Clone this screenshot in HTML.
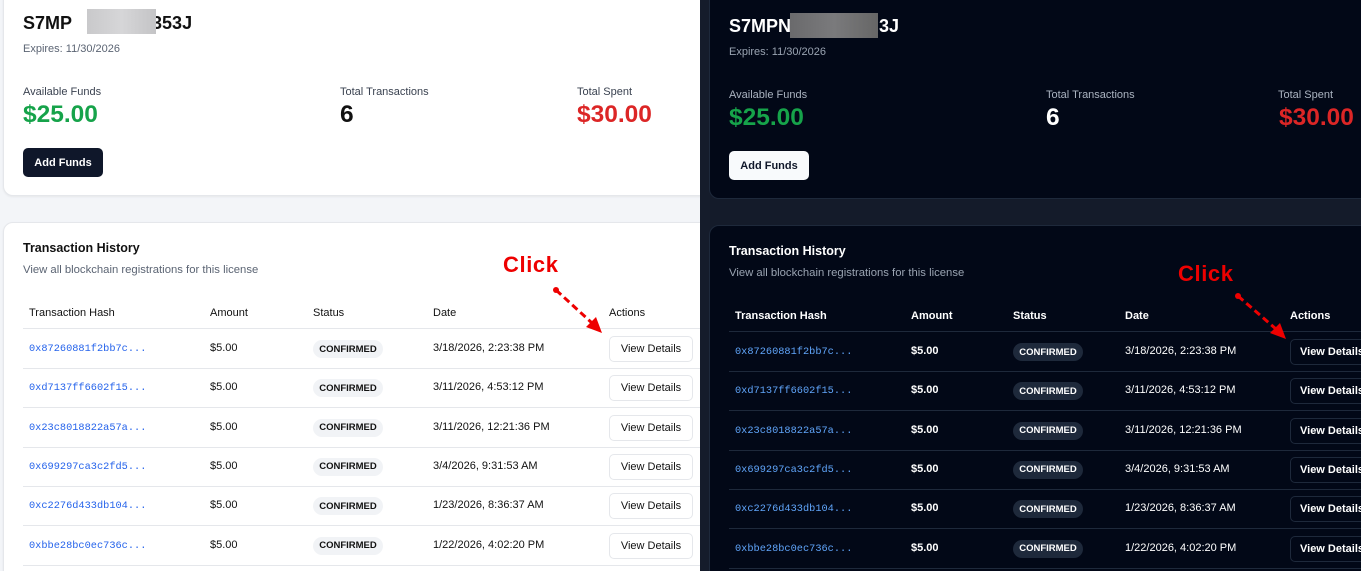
<!DOCTYPE html>
<html><head><meta charset="utf-8"><style>
*{margin:0;padding:0;box-sizing:border-box}
html,body{width:1361px;height:571px;overflow:hidden}
body{position:relative;font-family:"Liberation Sans",Arial,sans-serif;background:#111827}
.panel{position:absolute;overflow:hidden}
.L{left:0;top:0;width:700px;height:571px;background:#f3f5f8}
.R{left:700px;top:0;width:661px;height:571px;background:#141b2a}
.card{position:absolute;border-radius:10px;border:1px solid}
.L .card{background:#fff;border-color:#e5e7eb;box-shadow:0 1px 2px rgba(0,0,0,.06)}
.R .card{background:#020817;border-color:#1e293b}
.t{position:absolute;white-space:nowrap}
.title{font-size:18px;font-weight:bold}
.lbl{font-size:11px}
.big{font-size:24.5px;font-weight:bold}
.btn{position:absolute;border-radius:5px;font-size:11px;font-weight:bold;display:flex;align-items:center;justify-content:center}
.hash{font-family:"Liberation Mono",monospace;font-size:10.3px}
.badge{position:absolute;height:18px;width:70px;border-radius:9px;font-size:9.5px;font-weight:bold;display:flex;align-items:center;justify-content:center}
.vd{position:absolute;width:84px;height:26px;border-radius:5px;border:1px solid;font-size:11px;display:flex;align-items:center;justify-content:center}
.line{position:absolute;height:1px}
.click{position:absolute;color:#e00;font-weight:900;font-size:22px;font-family:"Liberation Sans",Arial,sans-serif;letter-spacing:.6px}
</style></head><body>

<div class="panel L">
 <div class="card" style="left:3px;top:-20px;width:720px;height:216px"></div>
 <div class="t title" style="left:23px;top:13px;color:#111">S7MP<span style="display:inline-block;width:80px"></span>353J</div>
 <div style="position:absolute;left:87px;top:9px;width:69px;height:25px;background:linear-gradient(90deg,#c9c9cb,#d6d6d8,#c4c4c6)"></div>
 <div class="t" style="left:23px;top:43px;font-size:11px;color:#5b6473">Expires: 11/30/2026</div>
 <div class="t lbl" style="left:23px;top:86px;color:#3a4250">Available Funds</div>
 <div class="t lbl" style="left:340px;top:86px;color:#3a4250">Total Transactions</div>
 <div class="t lbl" style="left:577px;top:86px;color:#3a4250">Total Spent</div>
 <div class="t big" style="left:23px;top:101px;color:#16a34a">$25.00</div>
 <div class="t big" style="left:340px;top:101px;color:#111">6</div>
 <div class="t big" style="left:577px;top:101px;color:#dc2626">$30.00</div>
 <div class="btn" style="left:23px;top:148px;width:80px;height:29px;background:#0f172a;color:#fff">Add Funds</div>

 <div class="card" style="left:3px;top:222px;width:720px;height:360px"></div>
 <div class="t" style="left:23px;top:241px;font-size:12.5px;font-weight:bold;color:#111">Transaction History</div>
 <div class="t" style="left:23px;top:264px;font-size:11.3px;color:#5b6473">View all blockchain registrations for this license</div>
 <div id="tblL"></div>
</div>

<div class="panel R">
 <div style="position:absolute;left:0;top:0;width:10px;height:571px;background:#151c2b"></div>
 <div class="card" style="left:9px;top:-20px;width:720px;height:219px"></div>
 <div class="t title" style="left:29px;top:16px;color:#fff">S7MPN<span style="display:inline-block;width:88px"></span>3J</div>
 <div style="position:absolute;left:90px;top:13px;width:88px;height:25px;background:linear-gradient(90deg,#6a6a6c,#7a7a7c,#666)"></div>
 <div class="t" style="left:29px;top:46px;font-size:11px;color:#9aa4b2">Expires: 11/30/2026</div>
 <div class="t lbl" style="left:29px;top:89px;color:#aab3c0">Available Funds</div>
 <div class="t lbl" style="left:346px;top:89px;color:#aab3c0">Total Transactions</div>
 <div class="t lbl" style="left:578px;top:89px;color:#aab3c0">Total Spent</div>
 <div class="t big" style="left:29px;top:104px;color:#16a34a">$25.00</div>
 <div class="t big" style="left:346px;top:104px;color:#fff">6</div>
 <div class="t big" style="left:579px;top:104px;color:#dc2626">$30.00</div>
 <div class="btn" style="left:29px;top:151px;width:80px;height:29px;background:#f8fafc;color:#0f172a">Add Funds</div>

 <div class="card" style="left:9px;top:225px;width:720px;height:360px"></div>
 <div class="t" style="left:29px;top:244px;font-size:12.5px;font-weight:bold;color:#fff">Transaction History</div>
 <div class="t" style="left:29px;top:267px;font-size:11.3px;color:#9aa4b2">View all blockchain registrations for this license</div>
 <div id="tblR"></div>
</div>

<div class="click" style="left:503px;top:252px">Click</div>
<svg style="position:absolute;left:0;top:0" width="1361" height="571">
 <g stroke="#e00" stroke-width="3" fill="#e00">
  <circle cx="556" cy="290" r="3" stroke="none"/>
  <line x1="556" y1="290" x2="592" y2="323" stroke-dasharray="7,4"/>
  <polygon points="602,333 586,327 596,317" stroke="none"/>
  <circle cx="1238" cy="296" r="3" stroke="none"/>
  <line x1="1238" y1="296" x2="1276" y2="329" stroke-dasharray="7,4"/>
  <polygon points="1286,339 1270,333 1280,323" stroke="none"/>
 </g>
</svg>
<div class="click" style="left:1178px;top:261px">Click</div>

<script>
const rows=[["0x87260881f2bb7c...","3/18/2026, 2:23:38 PM"],["0xd7137ff6602f15...","3/11/2026, 4:53:12 PM"],["0x23c8018822a57a...","3/11/2026, 12:21:36 PM"],["0x699297ca3c2fd5...","3/4/2026, 9:31:53 AM"],["0xc2276d433db104...","1/23/2026, 8:36:37 AM"],["0xbbe28bc0ec736c...","1/22/2026, 4:02:20 PM"]];
function build(id,ox,oy,dark,cols){
 const c={head:dark?'#fff':'#111',txt:dark?'#fff':'#111',hash:dark?'#60a5fa':'#2563eb',line:dark?'#1e293b':'#e5e7eb',bb:dark?'#1e293b':'#f1f3f6',bt:dark?'#fff':'#111',vb:dark?'#020817':'#fff',vbr:dark?'#1e293b':'#e5e7eb',vt:dark?'#fff':'#111'};
 const [a,s,d,ac]=cols;
 let h='';
 const hd=[["Transaction Hash",6],["Amount",a],["Status",s],["Date",d],["Actions",ac]];
 hd.forEach(([t,x])=>h+=`<div class="t" style="left:${ox+x}px;top:${oy+307}px;font-size:11px;font-weight:${dark?'bold':'normal'};color:${c.head}">${t}</div>`);
 h+=`<div class="line" style="left:${ox}px;top:${oy+328}px;width:700px;background:${c.line}"></div>`;
 rows.forEach((r,i)=>{
  const cy=oy+349+i*39.3;
  h+=`<div class="t hash" style="left:${ox+6}px;top:${cy-6}px;color:${c.hash}">${r[0]}</div>`;
  h+=`<div class="t" style="left:${ox+a}px;top:${cy-7}px;font-size:11px;color:${c.txt};font-weight:${dark?'bold':'normal'}">$5.00</div>`;
  h+=`<div class="badge" style="left:${ox+s}px;top:${cy-9}px;background:${c.bb};color:${c.bt}">CONFIRMED</div>`;
  h+=`<div class="t" style="left:${ox+d}px;top:${cy-7}px;font-size:11px;color:${c.txt}">${r[1]}</div>`;
  h+=`<div class="vd" style="left:${ox+ac}px;top:${cy-13}px;background:${c.vb};border-color:${c.vbr};color:${c.vt};font-weight:${dark?'bold':'normal'}">View Details</div>`;
  h+=`<div class="line" style="left:${ox}px;top:${cy+19}px;width:700px;background:${c.line}"></div>`;
 });
 document.getElementById(id).innerHTML=h;
}
build('tblL',23,0,false,[187,290,410,586]);
build('tblR',29,3,true,[182,284,396,561]);
</script>
</body></html>
